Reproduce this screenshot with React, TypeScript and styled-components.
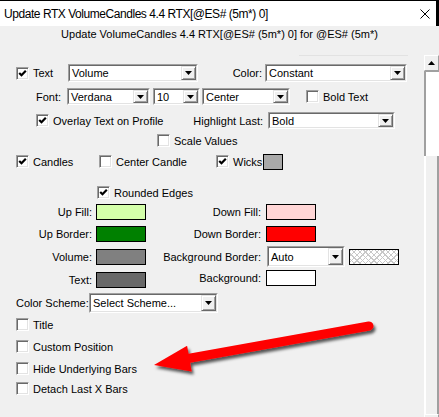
import React from 'react';
import styled, { createGlobalStyle } from 'styled-components';

const GlobalStyle = createGlobalStyle`
  html, body { margin: 0; padding: 0; background: #f0f0f0; }
  body {
    font-family: Tahoma, "Liberation Sans", Arial, sans-serif;
    font-size: 11px;
    color: #000;
  }
  * { box-sizing: border-box; }
`;

const Window = styled.div`
  position: relative;
  width: 439px;
  height: 417px;
  overflow: hidden;
  background: #f0f0f0;
  border-top: 1px solid #000;
  display: flex;
  flex-direction: column;
`;

const TitleBar = styled.div`
  flex: none;
  height: 25px;
  background: #fff;
  border-right: 3px solid #000;
  display: flex;
  align-items: center;
  justify-content: space-between;
  padding: 0 6px 0 4px;
  font-family: "Liberation Sans", Arial, sans-serif;
  font-size: 12px;
  letter-spacing: -0.45px;
`;

const Subtitle = styled.div`
  flex: none;
  height: 29px;
  line-height: 16px;
  text-align: center;
`;

const Body = styled.div`
  flex: 1;
  display: flex;
  min-height: 0;
`;

const Content = styled.div`
  flex: 1;
  display: flex;
  flex-direction: column;
  min-width: 0;
`;

const EdgeLine = styled.div`
  flex: none;
  height: 1px;
  width: 109px;
  margin-left: 299px;
  background: #e2e2e2;
`;

const Row = styled.div<{ $mt: number; $h: number; $pl?: number }>`
  flex: none;
  display: flex;
  align-items: center;
  height: ${p => p.$h}px;
  margin-top: ${p => p.$mt}px;
  padding-left: ${p => p.$pl ?? 0}px;
`;

const Slot = styled.div<{ $w: number; $right?: boolean; $pr?: number }>`
  flex: none;
  width: ${p => p.$w}px;
  display: flex;
  align-items: center;
  justify-content: ${p => (p.$right ? 'flex-end' : 'flex-start')};
  padding-right: ${p => p.$pr ?? 0}px;
  white-space: nowrap;
`;

const Group = styled.div<{ $self: 'flex-start' | 'flex-end' | 'center' }>`
  display: flex;
  align-items: center;
  align-self: ${p => p.$self};
`;

const Gap = styled.div<{ $w: number }>`
  flex: none;
  width: ${p => p.$w}px;
`;

const Label = styled.span`
  white-space: nowrap;
`;

const CheckWrap = styled.label`
  display: flex;
  align-items: center;
  gap: 4px;
  white-space: nowrap;
`;

const Box = styled.span`
  flex: none;
  width: 13px;
  height: 13px;
  background: #fff;
  border: 1px solid;
  border-color: #a0a0a0 #fff #fff #a0a0a0;
  box-shadow: inset 1px 1px #696969, inset -1px -1px #e3e3e3;
  display: flex;
  align-items: center;
  justify-content: center;
`;

const SelectOuter = styled.div<{ $w: number; $h: number }>`
  flex: none;
  width: ${p => p.$w}px;
  height: ${p => p.$h}px;
  border: 1px solid;
  border-color: #a0a0a0 #fff #fff #a0a0a0;
  display: flex;
`;

const SelectField = styled.div`
  flex: 1;
  display: flex;
  align-items: stretch;
  background: #fff;
  border: 1px solid;
  border-color: #696969 #e3e3e3 #e3e3e3 #696969;
  min-width: 0;
`;

const SelectValue = styled.span`
  flex: 1;
  display: flex;
  align-items: center;
  padding-left: 2px;
  white-space: nowrap;
  overflow: hidden;
`;

const ArrowBtn = styled.span`
  flex: none;
  width: 15px;
  background: #f0f0f0;
  border: 1px solid;
  border-color: #e3e3e3 #696969 #696969 #e3e3e3;
  box-shadow: inset 1px 1px #fff, inset -1px -1px #a0a0a0;
  display: flex;
  align-items: center;
  justify-content: center;
`;

const Swatch = styled.div<{ $w: number; $h: number; $color: string; $hatched?: boolean }>`
  flex: none;
  width: ${p => p.$w}px;
  height: ${p => p.$h}px;
  border: 1px solid #000;
  background-color: ${p => p.$color};
  background-image: ${p =>
    p.$hatched
      ? 'repeating-linear-gradient(45deg, transparent 0 3px, #c8c8c8 3px 4px), repeating-linear-gradient(-45deg, transparent 0 3px, #c8c8c8 3px 4px)'
      : 'none'};
`;

const ScrollBar = styled.div`
  flex: none;
  width: 15px;
  display: flex;
  flex-direction: column;
`;

const ScrollBtn = styled.div`
  flex: none;
  height: 16px;
  background: #f0f0f0;
  border: 1px solid;
  border-color: #fff #a0a0a0 #a0a0a0 #fff;
  display: flex;
  align-items: center;
  justify-content: center;
`;

const Thumb = styled.div`
  flex: none;
  height: 85px;
  background: #fff;
  border-left: 2px solid #a0a0a0;
  border-top: 1px solid #a0a0a0;
`;

const Track = styled.div`
  flex: none;
  height: 258px;
  background: #f0f0f0;
  border-left: 2px solid #fff;
  border-right: 2px solid #a0a0a0;
`;

const Overlay = styled.svg`
  position: absolute;
  left: 0;
  top: 0;
  pointer-events: none;
`;

const Check = ({ on }: { on?: boolean }) => (
  <Box>
    {on && (
      <svg width="9" height="9" viewBox="0 0 9 9">
        <polyline points="1.2,4 3.5,6.3 7.8,1.8" fill="none" stroke="#000" strokeWidth="2.2" />
      </svg>
    )}
  </Box>
);

const CheckItem = ({ on, text }: { on?: boolean; text: string }) => (
  <CheckWrap>
    <Check on={on} />
    <Label>{text}</Label>
  </CheckWrap>
);

const DownTri = () => (
  <svg width="7" height="4" viewBox="0 0 7 4">
    <polygon points="0,0 7,0 3.5,4" fill="#000" />
  </svg>
);

const Select = ({ w, h, value }: { w: number; h: number; value: string }) => (
  <SelectOuter $w={w} $h={h}>
    <SelectField>
      <SelectValue>{value}</SelectValue>
      <ArrowBtn>
        <DownTri />
      </ArrowBtn>
    </SelectField>
  </SelectOuter>
);

export default function App() {
  return (
    <>
      <GlobalStyle />
      <Window>
        <TitleBar>
          <span>Update RTX VolumeCandles 4.4 RTX[@ES# (5m*) 0]</span>
          <svg width="10" height="10" viewBox="0 0 10 10">
            <path d="M0.5 0.5 L9.5 9.5 M9.5 0.5 L0.5 9.5" stroke="#000" strokeWidth="1" />
          </svg>
        </TitleBar>
        <Subtitle>Update VolumeCandles 4.4 RTX[@ES# (5m*) 0] for @ES# (5m*)</Subtitle>
        <Body>
          <Content>
            <EdgeLine />
            <Row $mt={8} $h={18} $pl={16}>
              <Slot $w={52}>
                <CheckItem on text="Text" />
              </Slot>
              <Select w={130} h={18} value="Volume" />
              <Slot $w={67} $right $pr={3}>
                <Label>Color:</Label>
              </Slot>
              <Select w={142} h={18} value="Constant" />
            </Row>
            <Row $mt={6} $h={17} $pl={36}>
              <Slot $w={31}>
                <Label>Font:</Label>
              </Slot>
              <Select w={83} h={17} value="Verdana" />
              <Gap $w={3} />
              <Select w={47} h={17} value="10" />
              <Gap $w={2} />
              <Select w={88} h={17} value="Center" />
              <Gap $w={16} />
              <CheckItem text="Bold Text" />
            </Row>
            <Row $mt={7} $h={17} $pl={36}>
              <Slot $w={159}>
                <CheckItem on text="Overlay Text on Profile" />
              </Slot>
              <Slot $w={73} $right $pr={5}>
                <Label>Highlight Last:</Label>
              </Slot>
              <Select w={127} h={17} value="Bold" />
            </Row>
            <Row $mt={5} $h={13} $pl={157}>
              <CheckItem text="Scale Values" />
            </Row>
            <Row $mt={6} $h={17} $pl={16}>
              <Slot $w={83}>
                <CheckItem on text="Candles" />
              </Slot>
              <Slot $w={117}>
                <CheckItem text="Center Candle" />
              </Slot>
              <Slot $w={47}>
                <CheckItem on text="Wicks" />
              </Slot>
              <Swatch $w={20} $h={16} $color="#a9a9a9" />
            </Row>
            <Row $mt={16} $h={13} $pl={97}>
              <CheckItem on text="Rounded Edges" />
            </Row>
            <Row $mt={5} $h={16}>
              <Slot $w={96} $right $pr={4}>
                <Label>Up Fill:</Label>
              </Slot>
              <Swatch $w={50} $h={16} $color="#d4ffaa" />
              <Slot $w={120} $right $pr={5}>
                <Label>Down Fill:</Label>
              </Slot>
              <Swatch $w={50} $h={16} $color="#ffd6d6" />
            </Row>
            <Row $mt={6} $h={16}>
              <Slot $w={96} $right $pr={4}>
                <Label>Up Border:</Label>
              </Slot>
              <Swatch $w={50} $h={16} $color="#008000" />
              <Slot $w={120} $right $pr={5}>
                <Label>Down Border:</Label>
              </Slot>
              <Swatch $w={50} $h={16} $color="#ff0000" />
            </Row>
            <Row $mt={4} $h={21}>
              <Slot $w={96} $right $pr={4}>
                <Label>Volume:</Label>
              </Slot>
              <Swatch $w={50} $h={16} $color="#808080" />
              <Slot $w={121} $right $pr={6}>
                <Label>Background Border:</Label>
              </Slot>
              <Select w={78} h={21} value="Auto" />
              <Gap $w={4} />
              <Swatch $w={50} $h={16} $color="#ffffff" $hatched />
            </Row>
            <Row $mt={3} $h={18}>
              <Group $self="flex-end">
                <Slot $w={96} $right $pr={4}>
                  <Label>Text:</Label>
                </Slot>
                <Swatch $w={50} $h={16} $color="#696969" />
              </Group>
              <Group $self="flex-start">
                <Slot $w={120} $right $pr={5}>
                  <Label>Background:</Label>
                </Slot>
                <Swatch $w={50} $h={16} $color="#ffffff" />
              </Group>
            </Row>
            <Row $mt={5} $h={20} $pl={16}>
              <Slot $w={73}>
                <Label>Color Scheme:</Label>
              </Slot>
              <Select w={129} h={20} value="Select Scheme..." />
            </Row>
            <Row $mt={5} $h={13} $pl={16}>
              <CheckItem text="Title" />
            </Row>
            <Row $mt={9} $h={13} $pl={16}>
              <CheckItem text="Custom Position" />
            </Row>
            <Row $mt={9} $h={13} $pl={16}>
              <CheckItem text="Hide Underlying Bars" />
            </Row>
            <Row $mt={7} $h={13} $pl={16}>
              <CheckItem text="Detach Last X Bars" />
            </Row>
          </Content>
          <ScrollBar>
            <ScrollBtn>
              <svg width="7" height="4" viewBox="0 0 7 4">
                <polygon points="0,4 7,4 3.5,0" fill="#000" />
              </svg>
            </ScrollBtn>
            <Thumb />
            <Track />
            <ScrollBtn />
          </ScrollBar>
        </Body>
        <Overlay width="439" height="417" viewBox="0 0 439 417">
          <defs>
            <filter id="shadow" x="-20%" y="-50%" width="140%" height="200%">
              <feDropShadow dx="2" dy="3" stdDeviation="1.6" floodColor="#000" floodOpacity="0.65" />
            </filter>
          </defs>
          <g filter="url(#shadow)">
            <line x1="369" y1="325" x2="188" y2="357.5" stroke="#ff0000" strokeWidth="9" strokeLinecap="round" />
            <polygon points="154,364 187.1,344.8 191.7,370.4" fill="#ff0000" />
          </g>
        </Overlay>
      </Window>
    </>
  );
}
